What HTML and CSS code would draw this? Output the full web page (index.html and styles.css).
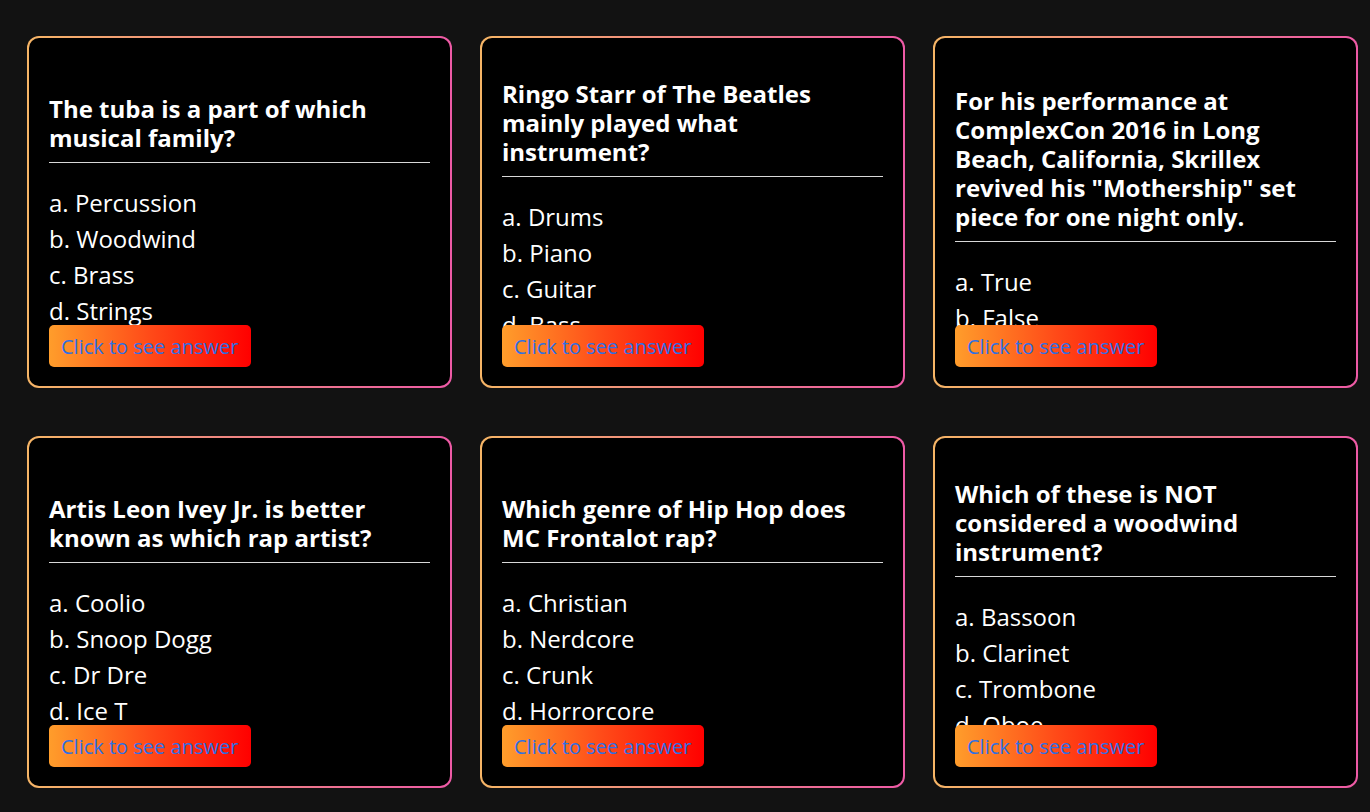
FILE: index.html
```html
<!DOCTYPE html>
<html lang="en">
<head>
<meta charset="utf-8">
<title>Music Trivia</title>
<link rel="stylesheet" href="styles.css">
</head>
<body>
<main class="grid">
  <div class="card">
    <div class="inner">
      <div class="content">
        <h2 class="question">The tuba is a part of which musical family?</h2>
        <hr class="rule">
        <ul class="options">
          <li>a. Percussion</li>
          <li>b. Woodwind</li>
          <li>c. Brass</li>
          <li>d. Strings</li>
        </ul>
      </div>
      <button class="reveal">Click to see answer</button>
    </div>
  </div>
  <div class="card">
    <div class="inner">
      <div class="content">
        <h2 class="question">Ringo Starr of The Beatles mainly played what instrument?</h2>
        <hr class="rule">
        <ul class="options">
          <li>a. Drums</li>
          <li>b. Piano</li>
          <li>c. Guitar</li>
          <li>d. Bass</li>
        </ul>
      </div>
      <button class="reveal">Click to see answer</button>
    </div>
  </div>
  <div class="card">
    <div class="inner">
      <div class="content">
        <h2 class="question">For his performance at ComplexCon 2016 in Long Beach, California, Skrillex revived his "Mothership" set piece for one night only.</h2>
        <hr class="rule">
        <ul class="options">
          <li>a. True</li>
          <li>b. False</li>
        </ul>
      </div>
      <button class="reveal">Click to see answer</button>
    </div>
  </div>
  <div class="card">
    <div class="inner">
      <div class="content">
        <h2 class="question">Artis Leon Ivey Jr. is better known as which rap artist?</h2>
        <hr class="rule">
        <ul class="options">
          <li>a. Coolio</li>
          <li>b. Snoop Dogg</li>
          <li>c. Dr Dre</li>
          <li>d. Ice T</li>
        </ul>
      </div>
      <button class="reveal">Click to see answer</button>
    </div>
  </div>
  <div class="card">
    <div class="inner">
      <div class="content">
        <h2 class="question">Which genre of Hip Hop does MC Frontalot rap?</h2>
        <hr class="rule">
        <ul class="options">
          <li>a. Christian</li>
          <li>b. Nerdcore</li>
          <li>c. Crunk</li>
          <li>d. Horrorcore</li>
        </ul>
      </div>
      <button class="reveal">Click to see answer</button>
    </div>
  </div>
  <div class="card">
    <div class="inner">
      <div class="content">
        <h2 class="question">Which of these is NOT considered a woodwind instrument?</h2>
        <hr class="rule">
        <ul class="options">
          <li>a. Bassoon</li>
          <li>b. Clarinet</li>
          <li>c. Trombone</li>
          <li>d. Oboe</li>
        </ul>
      </div>
      <button class="reveal">Click to see answer</button>
    </div>
  </div>
</main>
</body>
</html>
```
FILE: styles.css
```css
* { box-sizing: border-box; }
html, body { margin: 0; padding: 0; }
body {
  background: #121212;
  font-family: "Open Sans", "Noto Sans", sans-serif;
  color: #fff;
  height: 812px;
  overflow: hidden;
}
.grid {
  display: grid;
  grid-template-columns: repeat(3, 425px);
  grid-auto-rows: 352px;
  column-gap: 28px;
  row-gap: 48px;
  padding: 36px 0 0 27px;
}
.card {
  background: linear-gradient(90deg, #f6b566 0%, #ef7f86 55%, #ee5aa6 100%);
  border-radius: 12px;
  padding: 2px;
}
.inner {
  position: relative;
  height: 100%;
  background: #000;
  border-radius: 10px;
  display: flex;
  flex-direction: column;
  justify-content: center;
  padding: 0 20px 2px;
  overflow: hidden;
}
.question {
  margin: 0;
  font-size: 24px;
  line-height: 29px;
  font-weight: 700;
}
.rule {
  margin: 10px 0 22px;
  border: 0;
  border-top: 1px solid #d8d8d8;
  height: 0;
}
.options {
  list-style: none;
  margin: 0;
  padding: 0;
}
.options li {
  font-size: 24px;
  line-height: 36px;
}
.reveal {
  position: absolute;
  left: 20px;
  bottom: 19px;
  height: 42px;
  width: 202px;
  border: 0;
  border-radius: 5px;
  padding: 0 0 0 12px;
  text-align: left;
  font-family: "Open Sans", "Noto Sans", sans-serif;
  font-size: 20px;
  color: #2f6fe4;
  background: linear-gradient(90deg, #ff9d2b 0%, #ff4a18 50%, #ff0000 100%);
  cursor: pointer;
}
```
